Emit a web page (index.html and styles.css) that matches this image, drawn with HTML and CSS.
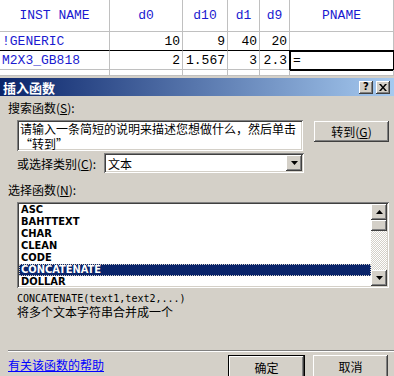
FILE: index.html
```html
<!DOCTYPE html>
<html lang="zh-CN">
<head>
    <meta charset="UTF-8">
    <title>插入函数</title>
    <link rel="stylesheet" href="styles.css">
</head>
<body>
    <div class="sheet">
        <div class="cell head">INST NAME</div>
        <div class="cell head">d0</div>
        <div class="cell head">d10</div>
        <div class="cell head">d1</div>
        <div class="cell head">d9</div>
        <div class="cell head">PNAME</div>

        <div class="cell name row-line">!GENERIC</div>
        <div class="cell num row-line">10</div>
        <div class="cell num row-line">9</div>
        <div class="cell num row-line">40</div>
        <div class="cell num row-line">20</div>
        <div class="cell row-line"></div>

        <div class="cell name">M2X3_GB818</div>
        <div class="cell num">2</div>
        <div class="cell num spill">1.567</div>
        <div class="cell num">3</div>
        <div class="cell num">2.3</div>
        <div class="cell active">=</div>

        <div class="cell"></div>
        <div class="cell"></div>
        <div class="cell"></div>
        <div class="cell"></div>
        <div class="cell"></div>
        <div class="cell"></div>
    </div>

    <div class="dialog">
        <div class="titlebar">
            <span class="title">插入函数</span>
            <span class="tb-btn">?</span>
            <span class="tb-btn close">
                <svg width="8" height="7" viewBox="0 0 8 7"><path d="M0 0h2l2 2.5L6 0h2L5 3.5 8 7H6L4 4.5 2 7H0l3-3.5z" fill="#000"/></svg>
            </span>
        </div>

        <div class="body">
            <div class="label">搜索函数(<u>S</u>):</div>
            <div class="search-row">
                <div class="field search-box">
                    <div class="search-line first">请输入一条简短的说明来描述您想做什么，然后单击</div>
                    <div class="search-line">“转到”</div>
                </div>
                <div class="btn go">转到(<u>G</u>)</div>
            </div>

            <div class="category-row">
                <span class="cat-label">或选择类别(<u>C</u>):</span>
                <div class="field select">
                    <span class="select-value">文本</span>
                    <span class="drop">
                        <svg width="7" height="4" viewBox="0 0 7 4"><path d="M0 0h7L3.5 4z" fill="#000"/></svg>
                    </span>
                </div>
            </div>

            <div class="label list-label">选择函数(<u>N</u>):</div>
            <div class="field listbox">
                <div class="items">
                    <div class="item">ASC</div>
                    <div class="item">BAHTTEXT</div>
                    <div class="item">CHAR</div>
                    <div class="item">CLEAN</div>
                    <div class="item">CODE</div>
                    <div class="item selected">CONCATENATE</div>
                    <div class="item">DOLLAR</div>
                </div>
                <div class="scrollbar">
                    <span class="sb-btn">
                        <svg width="7" height="4" viewBox="0 0 7 4"><path d="M3.5 0L7 4H0z" fill="#000"/></svg>
                    </span>
                    <span class="sb-thumb"></span>
                    <span class="sb-track"></span>
                    <span class="sb-btn">
                        <svg width="7" height="4" viewBox="0 0 7 4"><path d="M0 0h7L3.5 4z" fill="#000"/></svg>
                    </span>
                </div>
            </div>

            <div class="syntax">CONCATENATE(text1,text2,...)</div>
            <div class="summary">将多个文本字符串合并成一个</div>

            <div class="separator"></div>
            <div class="footer">
                <a class="help" href="#">有关该函数的帮助</a>
                <div class="btn ok">确定</div>
                <div class="btn cancel">取消</div>
            </div>
        </div>
    </div>
</body>
</html>
```

FILE: styles.css
```css
body {
    margin: 0;
    width: 394px;
    height: 376px;
    overflow: hidden;
    background-color: #fff;
    font-family: "Noto Sans CJK SC", sans-serif;
    font-size: 12px;
    color: #000;
}
.sheet {
    display: grid;
    grid-template-columns: 110px 73px 45px 32px 30px 1fr;
    grid-template-rows: 32px 19px 19px 6px;
    font-family: "Liberation Mono", "Noto Sans CJK SC", monospace;
    font-size: 13px;
}
.cell {
    box-sizing: border-box;
    border-right: 1px solid #c0c0c0;
    border-bottom: 1px solid #c0c0c0;
    display: flex;
    align-items: center;
    white-space: nowrap;
}
.cell.head {
    justify-content: center;
    color: #1a1ad0;
}
.cell.name {
    color: #1a1ad0;
    padding-left: 2px;
}
.cell.num {
    justify-content: flex-end;
    padding-right: 2px;
}
.cell.row-line {
    border-bottom: 1px solid #000;
}
.cell.spill {
    overflow: visible;
}
.cell.active {
    outline: 2px solid #000;
    outline-offset: -1px;
    padding-left: 3px;
}
.dialog {
    border-top: 2px solid #d4d0c8;
    background-color: #d4d0c8;
    height: 298px;
}
.titlebar {
    height: 18px;
    display: flex;
    align-items: center;
    background: linear-gradient(to right, #0a246a, #a6caf0);
    padding: 0 2px 0 3px;
}
.title {
    flex: 1;
    color: #fff;
    font-weight: bold;
    font-size: 13px;
    line-height: 1;
}
.tb-btn {
    width: 14px;
    height: 13px;
    box-sizing: border-box;
    background-color: #d4d0c8;
    box-shadow: inset -1px -1px #404040, inset 1px 1px #fff, inset -2px -2px #808080;
    display: flex;
    align-items: center;
    justify-content: center;
    font-family: "DejaVu Sans", sans-serif;
    font-weight: bold;
    font-size: 10px;
    line-height: 1;
}
.tb-btn.close {
    margin-left: 3px;
    margin-right: 2px;
}
.body {
    padding-left: 8px;
}
.label {
    margin-top: 5px;
    line-height: 14px;
}
.field {
    box-sizing: border-box;
    background-color: #fff;
    box-shadow: inset 1px 1px #808080, inset -1px -1px #fff, inset 2px 2px #404040, inset -2px -2px #d4d0c8;
}
.search-row {
    display: flex;
    align-items: flex-start;
    margin-top: 5px;
    margin-left: 9px;
}
.search-box {
    width: 286px;
    height: 31px;
    padding: 2px 3px 0;
    white-space: nowrap;
    overflow: hidden;
}
.search-line {
    height: 14px;
    line-height: 14px;
}
.search-line.first {
    height: 15px;
}
.btn {
    box-sizing: border-box;
    width: 75px;
    height: 21px;
    background-color: #d4d0c8;
    box-shadow: inset -1px -1px #404040, inset 1px 1px #fff, inset -2px -2px #808080;
    display: flex;
    align-items: center;
    justify-content: center;
    line-height: 1;
}
.btn.go {
    margin-left: 11px;
    margin-top: 1px;
}
.category-row {
    display: flex;
    align-items: center;
    margin-top: 2px;
    margin-left: 9px;
}
.cat-label {
    width: 87px;
}
.select {
    width: 200px;
    height: 20px;
    display: flex;
    align-items: center;
    padding: 2px;
}
.select-value {
    flex: 1;
    padding-left: 2px;
}
.drop {
    width: 16px;
    height: 16px;
    box-sizing: border-box;
    background-color: #d4d0c8;
    box-shadow: inset -1px -1px #404040, inset 1px 1px #fff, inset -2px -2px #808080;
    display: flex;
    align-items: center;
    justify-content: center;
}
.list-label {
    margin-top: 10px;
}
.listbox {
    margin-top: 5px;
    margin-left: 9px;
    width: 372px;
    height: 86px;
    padding: 2px 2px 0;
    display: flex;
}
.items {
    flex: 1;
    font-family: "Liberation Sans Narrow", "DejaVu Sans Condensed", sans-serif;
    font-stretch: condensed;
    font-weight: bold;
    font-size: 11px;
}
.item {
    height: 12px;
    line-height: 12px;
    padding-left: 2px;
}
.item.selected {
    background-color: #0a246a;
    color: #fff;
    outline: 1px dotted #d4d0c8;
    outline-offset: -1px;
}
.scrollbar {
    width: 16px;
    height: 82px;
    display: flex;
    flex-direction: column;
}
.sb-btn {
    height: 16px;
    box-sizing: border-box;
    background-color: #d4d0c8;
    box-shadow: inset -1px -1px #404040, inset 1px 1px #fff, inset -2px -2px #808080;
    display: flex;
    align-items: center;
    justify-content: center;
    flex-shrink: 0;
}
.sb-thumb {
    height: 11px;
    flex-shrink: 0;
    background-color: #d4d0c8;
    box-shadow: inset -1px -1px #404040, inset 1px 1px #fff, inset -2px -2px #808080;
}
.sb-track {
    flex: 1;
    background: repeating-conic-gradient(#d4d0c8 0 25%, #fff 0 50%) 0 0 / 2px 2px;
}
.syntax {
    margin-top: 5px;
    margin-left: 9px;
    font-family: "DejaVu Sans Mono", monospace;
    font-size: 10px;
    line-height: 12px;
}
.summary {
    margin-left: 9px;
    line-height: 14px;
}
.separator {
    margin-top: 31px;
    border-top: 1px solid #808080;
    border-bottom: 1px solid #fff;
}
.footer {
    display: flex;
    align-items: flex-start;
    margin-top: 3px;
}
.help {
    margin-top: 3px;
    color: #0000ff;
    line-height: 14px;
}
.btn.ok {
    margin-left: auto;
    height: 23px;
    box-shadow: 0 0 0 1px #000, inset -1px -1px #404040, inset 1px 1px #fff, inset -2px -2px #808080;
    margin-top: 1px;
}
.btn.cancel {
    margin-left: 9px;
    margin-right: 6px;
    height: 23px;
}
```
